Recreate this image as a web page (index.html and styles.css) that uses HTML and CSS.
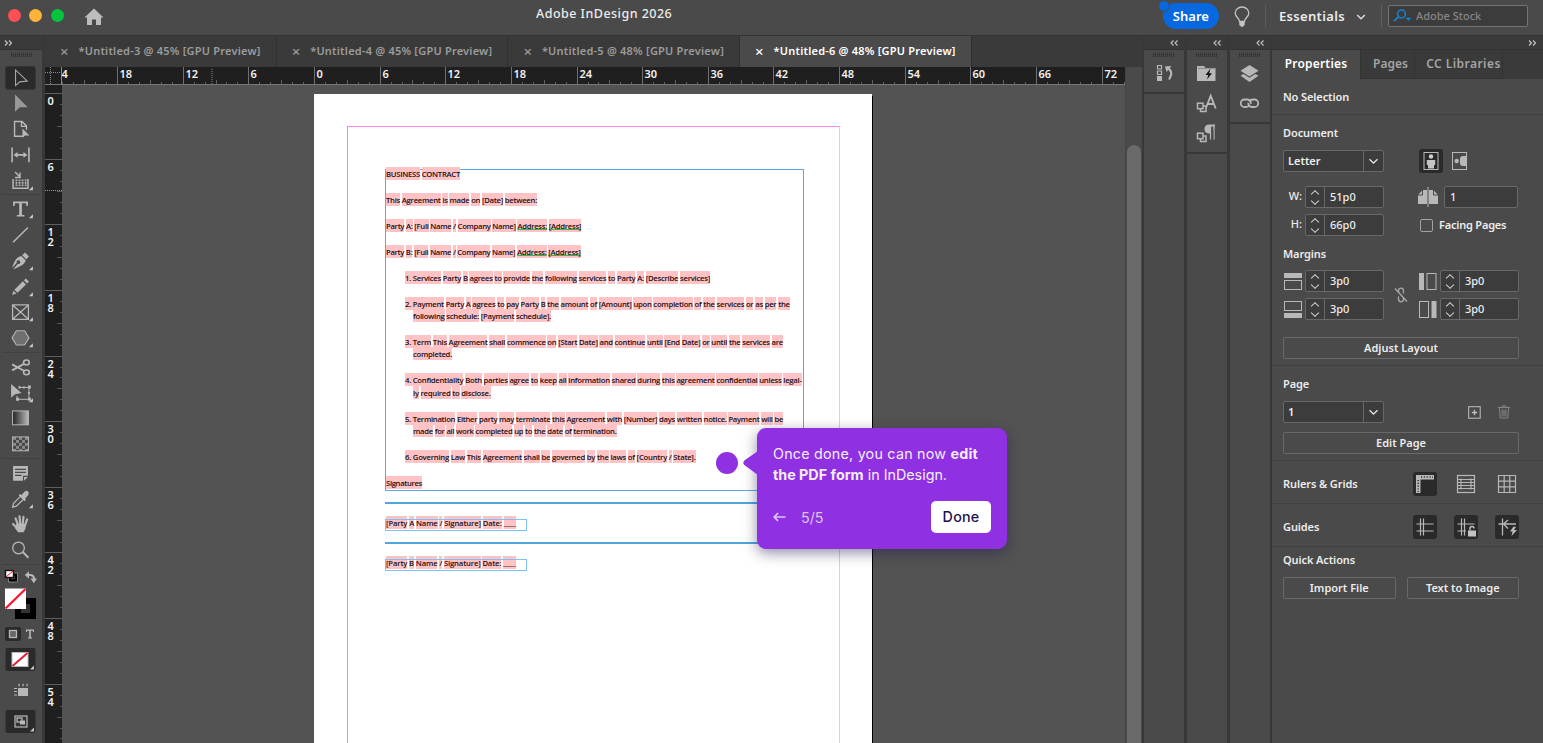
FILE: index.html
```
<!DOCTYPE html>
<html lang="en">
  <head>
    <meta charset="utf-8" />
    <title>Adobe InDesign 2026</title>
    <meta name="viewport" content="width=device-width, initial-scale=1" />
    <link rel="stylesheet" href="styles.css">
  </head>

  <body>
    <header class="titlebar">
      <div class="title-left">
        <span class="light red"></span>
        <span class="light yellow"></span>
        <span class="light green"></span>
        <svg class="home" width="20" height="18" viewBox="0 0 20 18"><path d="M10 0.5L19.5 9.5H17V17H12V11.5H8V17H3V9.5H0.5Z" fill="#bdbdbd"/></svg>
      </div>
      <h1>Adobe InDesign 2026</h1>
      <div class="title-right">
        <button class="share">Share</button>
        <svg class="bulb" width="16" height="22" viewBox="0 0 16 22"><path d="M5.5 15.5C5.5 12 1.2 11 1.2 7.2A6.8 6.2 0 0 1 14.8 7.2C14.8 11 10.5 12 10.5 15.5Z" fill="none" stroke="#c4c4c4" stroke-width="1.3"/><path d="M5.3 15.5H10.7V19L8 21.3L5.3 19Z" fill="#c4c4c4"/></svg>
        <i class="bar"></i>
        <span class="essentials">Essentials</span>
        <svg class="chev" width="10" height="6" viewBox="0 0 10 6"><path d="M1.2 1L5 4.7L8.8 1" fill="none" stroke="#d8d8d8" stroke-width="1.6"/></svg>
        <i class="bar"></i>
        <div class="stock">
          <svg width="20" height="14" viewBox="0 0 20 14"><circle cx="8.5" cy="5" r="3.9" fill="none" stroke="#1684d8" stroke-width="1.5"/><path d="M5.7 7.8L1 12" stroke="#1684d8" stroke-width="1.7"/><path d="M12.5 8.8H18.5L15.5 11.8Z" fill="#1684d8"/></svg>
          Adobe Stock
        </div>
      </div>
    </header>

    <div class="workspace">
      <!-- toolbox -->
      <aside class="toolbox">
        <div class="strip"><svg width="9" height="6" viewBox="0 0 9 6"><path d="M1 .5L3.500 3L1 5.500M5 .5L7.500 3L5 5.500"/></svg></div>
        <i class="grip"></i>
        <div class="tools">
          <svg class="tool" viewBox="0 0 42 26"><rect x="5.5" y="1.5" width="30" height="23" rx="2" fill="#2a2a2a" stroke="#343434"/><path d="M15.5 5V20.8L19.7 17L27.3 16.2Z" fill="none" stroke="#a8a8a8" stroke-width="1.1"/></svg>
          <svg class="tool" viewBox="0 0 42 26"><path d="M15 4.5V22L19.8 17.5L27.8 17.3Z" fill="#999"/></svg>
          <svg class="tool" viewBox="0 0 42 26"><path d="M23 20.5H14.5V5.5H22L26.5 10V14M21.5 5.5V10.5H26.5" fill="none" stroke="#b8b8b8" stroke-width="1.4"/><path d="M22.5 12.5V22L25 19.6H29.5Z" fill="#b8b8b8"/></svg>
          <svg class="tool" viewBox="0 0 42 26"><path d="M12 5.5V20.5M29 5.5V20.5M15 13H26" fill="none" stroke="#b8b8b8" stroke-width="1.6"/><path d="M13.5 13L17.5 10V16ZM27.5 13L23.5 10V16Z" fill="#b8b8b8"/></svg>
          <svg class="tool" viewBox="0 0 42 26"><path d="M13 11V20.5H28V11M15 4L20 9M20 4.5V9.5H15" fill="none" stroke="#b8b8b8" stroke-width="1.5"/><path d="M15.5 12.5H26.5M15.5 15H26.5M15.5 17.5H26.5" stroke="#b8b8b8" stroke-width="1.6" stroke-dasharray="1.8 1.3"/><path class="more" d="M33 18.5V22.5H29Z"/></svg>
          <i class="sep"></i>
          <svg class="tool" viewBox="0 0 42 26"><path d="M13 5.5H28V10H26.6L26 7.4H21.9V19L24.5 19.5V20.7H16.7V19.5L19.2 19V7.4H15L14.4 10H13Z" fill="#b8b8b8"/><path class="more" d="M33 18.5V22.5H29Z"/></svg>
          <svg class="tool" viewBox="0 0 42 26"><path d="M13 20.5L28 5.5" stroke="#b8b8b8" stroke-width="1.5"/></svg>
          <svg class="tool" viewBox="0 0 42 26"><path d="M22.2 7.2L25 4.5L29 8.5L26.3 11.3ZM21.3 8L25.7 12.4C25 16 21.5 18.5 13 21.5L18 16A1.8 1.8 0 1 0 16.8 15L12 20.2C14.5 12 17 9 21.3 8Z" fill="#b8b8b8"/><path class="more" d="M33 18.5V22.5H29Z"/></svg>
          <svg class="tool" viewBox="0 0 42 26"><path d="M24 6.3L26 4.5L29 7.5L27.1 9.5ZM22.9 7.3L26 10.5L17.5 19L14.3 15.8ZM13.4 16.8L16.4 19.8L12 21.3Z" fill="#b8b8b8"/><path class="more" d="M33 18.5V22.5H29Z"/></svg>
          <svg class="tool" viewBox="0 0 42 26"><path d="M12.5 6H28.5V20.5H12.5ZL28.5 20.5M28.5 6L12.5 20.5" fill="none" stroke="#b8b8b8" stroke-width="1.3"/><path class="more" d="M33 18.5V22.5H29Z"/></svg>
          <svg class="tool" viewBox="0 0 42 26"><path d="M12 13L16.3 5.8H24.7L29 13L24.7 20.2H16.3Z" fill="#707070" stroke="#b0b0b0" stroke-width="1.2"/><path class="more" d="M33 18.5V22.5H29Z"/></svg>
          <i class="sep"></i>
          <svg class="tool" viewBox="0 0 42 26"><g fill="none" stroke="#b8b8b8" stroke-width="1.6"><ellipse cx="26.500" cy="8.500" rx="2.900" ry="2.400"/><ellipse cx="26.500" cy="18.500" rx="2.900" ry="2.400"/><path d="M24 10L12 16.500M24 17L12 10.500" stroke-width="1.800"/></g></svg>
          <svg class="tool" viewBox="0 0 42 26"><path d="M11 4V18L15 14.5L21.5 13Z" fill="#b8b8b8"/><path d="M20 7.5H29V19.5H17V16" fill="none" stroke="#b8b8b8"/><g fill="#b8b8b8"><path d="M28 5.5h3v3h-3zM28 18h3v3h-3zM16 18h3v3h-3zM18.500 6h2v2.500h-2zM23 6.500h2v2h-2zM28 12h2v2h-2z"/></g><path class="more" d="M33 18.5V22.5H29Z"/></svg>
          <svg class="tool" viewBox="0 0 42 26"><defs><linearGradient id="grad"><stop offset="0" stop-color="#222"/><stop offset="1" stop-color="#bbb"/></linearGradient></defs><rect x="12.5" y="6" width="16" height="14" fill="url(#grad)" stroke="#b8b8b8"/></svg>
          <svg class="tool" viewBox="0 0 42 26"><defs><pattern id="check" x="13" y="6" width="6" height="6" patternUnits="userSpaceOnUse"><rect width="6" height="6" fill="#444"/><path d="M0 0h3v3h-3zM3 3h3v3h-3z" fill="#8b8b8b"/></pattern></defs><rect x="12.500" y="6" width="16" height="14" fill="url(#check)" stroke="#b8b8b8"/></svg>
          <i class="sep"></i>
          <svg class="tool" viewBox="0 0 42 26"><path d="M13 6H28V16H23V21H13Z" fill="#b8b8b8"/><path d="M24 17.2H28L24 21Z" fill="#b8b8b8"/><path d="M15 9.500H26M15 12.500H26M15 15.500H21.500" stroke="#4a4a4a" stroke-width="1.100"/></svg>
          <svg class="tool" viewBox="0 0 42 26"><path d="M21.5 9L24.500 5.800Q26.500 4 28.300 5.700Q29.800 7.400 28 9.500L25.200 12.500L26 14L24.500 15.300L18.700 9.500L20 8.200Z" fill="#b8b8b8"/><path d="M20 11L13.500 17.500L12.500 21.300L16.300 20.300L23 13.800" fill="none" stroke="#b8b8b8" stroke-width="1.300"/><path class="more" d="M33 18.5V22.5H29Z"/></svg>
          <svg class="tool" viewBox="0 0 42 26"><g stroke="#b8b8b8" stroke-linecap="round" stroke-width="2.200" fill="none"><path d="M18 14L15.500 7.500M20.200 13L19.500 5.500M22.700 13L23.500 6M25 14.500L27.200 8.500M17 17.500L13 13.200"/></g><path d="M16.500 12.500L26.200 13L25.500 18L23.500 21.500H18L15 17.500Z" fill="#b8b8b8"/></svg>
          <svg class="tool" viewBox="0 0 42 26"><circle cx="18.500" cy="11" r="5.900" fill="none" stroke="#b8b8b8" stroke-width="1.300"/><path d="M22.800 15.200L28.500 21" stroke="#b8b8b8" stroke-width="2"/></svg>
          <i class="sep"></i>
          <!-- fill and stroke -->
          <svg class="swatches" width="42" height="59" viewBox="0 0 42 59"><g transform="translate(0 -565)">
            <rect x="10" y="573.500" width="6" height="6" fill="none" stroke="#000" stroke-width="2.500"/><rect x="8.500" y="572" width="9" height="9" fill="none" stroke="#aaa" stroke-width=".6"/><rect x="5.500" y="569.500" width="8" height="7" fill="#fff" stroke="#111" stroke-width="1.400"/><path d="M6 576L13 570" stroke="#f01830"/>
            <path d="M27.500 574H30Q34 574 34 578" fill="none" stroke="#b8b8b8" stroke-width="2"/><path d="M24.800 574L29 570.300V577.700ZM30.500 577.500H37L33.800 582.300Z" fill="#b8b8b8"/>
            <rect x="18" y="600" width="15" height="15" fill="#4a4a4a" stroke="#000" stroke-width="6"/><rect x="20.500" y="602.500" width="10" height="10" fill="#333" stroke="#000"/>
            <rect x="5" y="587.500" width="21" height="20.500" fill="#fff"/><path d="M5.500 607.500L25.500 588" stroke="#fa1530" stroke-width="2.300"/>
          </g></svg>
          <svg width="42" height="20" viewBox="0 0 42 20"><rect x="5" y="2" width="16" height="14" rx="2" fill="#2a2a2a"/><rect x="9.500" y="5.500" width="7" height="7" fill="#666" stroke="#b8b8b8" stroke-width="1.300"/><path d="M26 4.500H34V7H33.200L32.700 5.700H30.800V12.300L32 12.600V13.400H28V12.600L29.200 12.300V5.700H27.300L26.800 7H26Z" fill="#b8b8b8"/></svg>
          <svg width="42" height="30" viewBox="0 0 42 30"><rect x="5.500" y="3" width="30" height="23" rx="2" fill="#2a2a2a"/><rect x="12" y="7.500" width="16" height="14" fill="#fff" stroke="#bbb"/><path d="M12.500 21L27.500 8" stroke="#e61d33" stroke-width="2"/><path class="more" d="M34 20.500V24.500H30Z"/></svg>
          <svg width="42" height="32" viewBox="0 0 42 32"><path d="M18 13H28V21H18Z" fill="#b8b8b8"/><path d="M18.500 10H28" stroke="#b8b8b8" stroke-width="2.500" stroke-dasharray="1.200 2.800"/><path d="M14 13.500H17M14 16.500H17M14 20H17" stroke="#b8b8b8" stroke-width="1.200"/></svg>
          <svg width="42" height="30" viewBox="0 0 42 30"><rect x="5.500" y="3" width="30" height="23" rx="2" fill="#2a2a2a"/><rect x="15" y="9" width="12" height="11" fill="#333" stroke="#b8b8b8" stroke-width="1.200"/><rect x="17" y="11" width="5" height="4" fill="none" stroke="#b8b8b8" stroke-width="1.300"/><rect x="20" y="13.500" width="5" height="4" fill="#b8b8b8"/><path class="more" d="M34 20.500V24.500H30Z"/></svg>
        </div>
      </aside>

      <!-- open documents -->
      <main class="editor">
        <nav class="tabs">
          <div class="tab"><b>×</b>*Untitled-3 @ 45% [GPU Preview]</div>
          <div class="tab"><b>×</b>*Untitled-4 @ 45% [GPU Preview]</div>
          <div class="tab"><b>×</b>*Untitled-5 @ 48% [GPU Preview]</div>
          <div class="tab active"><b>×</b>*Untitled-6 @ 48% [GPU Preview]</div>
        </nav>
        <div class="view">
          <div class="ruled">
            <svg id="ruler-x" width="1080" height="18"></svg>
            <div class="ruled-body">
              <svg id="ruler-y" width="17" height="658"></svg>
              <div class="canvas">
                <div class="page">
                  <div class="margins"></div>
                  <div class="frame">
                    <div class="copy" id="copy"></div>
                  </div>
                  <i class="rule first"></i>
                  <div class="sign a"></div>
                  <i class="rule second"></i>
                  <div class="sign b"></div>
                </div>
                <i class="dot"></i>
                <div class="callout">
                  <svg class="beak" width="15" height="24" viewBox="0 0 15 24"><path d="M15 0L2 9Q-1.500 12 2 14.500L15 24Z" fill="#8f30e2"/></svg>
                  <p><span class="fit" data-w="205">Once done, you can now <strong>edit</strong></span><br /><span class="fit" data-w="174"><strong>the PDF form</strong> in InDesign.</span></p>
                  <div class="callout-foot">
                    <svg width="13" height="10" viewBox="0 0 13 10"><path d="M12.500 5H1.500M5 1.200L1.200 5L5 8.800" fill="none" stroke="#dcc5f3" stroke-width="1.700"/></svg>
                    <span class="step">5/5</span>
                    <button class="done">Done</button>
                  </div>
                </div>
              </div>
            </div>
          </div>
          <div class="scroll"><i></i></div>
        </div>
      </main>

      <!-- collapsed panels -->
      <aside class="dock">
        <div class="strip"><svg width="9" height="6" viewBox="0 0 9 6"><path d="M3.500 .5L1 3L3.500 5.500M7.500 .5L5 3L7.500 5.500"/></svg></div>
        <div class="dock-box one">
          <i class="grip"></i>
          <svg width="40" height="30" viewBox="0 0 40 30"><g fill="none" stroke="#b8b8b8" stroke-width="1.200"><path d="M13.500 6.500h4v3.500h-4zM13.500 12h4v3.500h-4z"/></g><path d="M13 17h5v5h-5z" fill="#b8b8b8"/><path d="M22.500 8.500Q30.500 12 25 20.500" fill="none" stroke="#b8b8b8" stroke-width="2"/><path d="M21 7.500L27.500 7L22.500 13Z" fill="#b8b8b8"/></svg>
        </div>
        <div class="dock-rest"></div>
      </aside>
      <aside class="dock">
        <div class="strip"><svg width="9" height="6" viewBox="0 0 9 6"><path d="M3.500 .5L1 3L3.500 5.500M7.500 .5L5 3L7.500 5.500"/></svg></div>
        <div class="dock-box three">
          <i class="grip"></i>
          <svg width="40" height="30" viewBox="0 0 40 30"><path d="M10 7H17L18.500 9H28.500V22H10Z" fill="#b8b8b8"/><path d="M11 9.300H28" stroke="#777" stroke-width=".7"/><path d="M23.500 9.500L18.500 16H21.300L20 20.500L25 14.300H22.200Z" fill="#151515"/></svg>
          <svg width="40" height="30" viewBox="0 0 40 30"><path d="M18.700 19.500L23.700 6.800L28.700 19.500M20.500 15H27" fill="none" stroke="#b8b8b8" stroke-width="1.800"/><g fill="#4a4a4a" stroke="#b8b8b8" stroke-width="1.500"><rect x="13.500" y="17" width="5.500" height="5.500"/><rect x="10.500" y="14.200" width="5.500" height="5.500"/></g></svg>
          <svg width="40" height="30" viewBox="0 0 40 30"><path d="M28 6H22A4 4 0 0 0 22 14H23.500V20.500M27 6V20.500" fill="#b8b8b8" stroke="#b8b8b8" stroke-width="1.200"/><path d="M24.100 7.500V20H26.300V7.500Z" fill="#4a4a4a"/><g fill="#4a4a4a" stroke="#b8b8b8" stroke-width="1.500"><rect x="13.500" y="17" width="5.500" height="5.500"/><rect x="10.500" y="14.200" width="5.500" height="5.500"/></g></svg>
        </div>
        <div class="dock-rest"></div>
      </aside>
      <aside class="dock">
        <div class="strip"><svg width="9" height="6" viewBox="0 0 9 6"><path d="M3.500 .5L1 3L3.500 5.500M7.500 .5L5 3L7.500 5.500"/></svg></div>
        <div class="dock-box two">
          <i class="grip"></i>
          <svg width="40" height="30" viewBox="0 0 40 30"><path d="M19.500 6L28.500 11.800L19.500 17.500L10.500 11.800Z" fill="#b8b8b8"/><path d="M10.500 16.800L13.500 15L19.500 18.800L25.500 15L28.500 16.800L19.500 23Z" fill="#b8b8b8"/></svg>
          <svg width="40" height="30" viewBox="0 0 40 30"><g fill="none" stroke="#b8b8b8" stroke-width="1.800"><path d="M20 16Q18.500 18 16 18H14.500A3.700 3.700 0 0 1 14.500 10.500H17.500A3.700 3.700 0 0 1 20.800 14.800"/><path d="M19 12.500Q20.500 10.500 23 10.500H24.500A3.700 3.700 0 0 1 24.500 18H21.500A3.700 3.700 0 0 1 18.300 13.800"/></g></svg>
        </div>
        <div class="dock-rest"></div>
      </aside>

      <!-- properties -->
      <aside class="props">
        <div class="strip"><svg width="9" height="6" viewBox="0 0 9 6"><path d="M1 .5L3.500 3L1 5.500M5 .5L7.500 3L5 5.500"/></svg></div>
        <nav class="prop-tabs">
          <span class="on">Properties</span><span class="pages">Pages</span><span class="cc">CC Libraries</span>
        </nav>
        <section class="nosel"><h3>No Selection</h3></section>
        <section class="doc">
          <h3>Document</h3>
          <div class="row">
            <div class="select"><span>Letter</span><svg width="19" height="20" viewBox="0 0 19 20"><path d="M5.500 8.300L9.500 12L13.500 8.300" fill="none" stroke="#e4e4e4" stroke-width="1.300"/></svg></div>
            <div class="right orient">
              <svg width="24" height="24" viewBox="0 0 24 24"><rect width="24" height="24" rx="3" fill="#2a2a2a"/><rect x="5" y="3.500" width="14" height="17" fill="none" stroke="#b8b8b8"/><circle cx="12" cy="7.500" r="2.200" fill="#d0d0d0"/><path d="M7.800 11H16.200V16H15V19.500H9V16H7.800Z" fill="#c4c4c4"/></svg>
              <svg width="15" height="18" viewBox="0 0 15 18"><rect x=".5" y=".5" width="14" height="17" fill="none" stroke="#b8b8b8"/><circle cx="4.700" cy="9" r="2.200" fill="#b8b8b8"/><path d="M14 4V14H11Q8 14 8 11V7Q8 4 11 4Z" fill="#b8b8b8"/></svg>
            </div>
          </div>
          <div class="row dim w">
            <label>W:</label><div class="spin"><i></i><span>51p0</span></div>
            <div class="right count"><svg width="20" height="20" viewBox="0 0 20 20"><path d="M0 8L4.500 3H9V17H0ZM20 8L15.500 3H11V17H20Z" fill="#b8b8b8"/><path d="M4.500 3V8H0M15.500 3V8H20" fill="none" stroke="#4a4a4a"/><path d="M10 0V20" stroke="#b8b8b8"/></svg><div class="input">1</div></div>
          </div>
          <div class="row dim">
            <label>H:</label><div class="spin"><i></i><span>66p0</span></div>
            <div class="right facing"><i class="checkbox"></i>Facing Pages</div>
          </div>
          <h3 class="margins-title">Margins</h3>
          <div class="margin-grid">
            <div class="col">
              <div class="row"><svg width="22" height="19" viewBox="0 0 22 19"><path d="M1 1H19V6H1Z" fill="#b8b8b8"/><rect x="1.500" y="8.500" width="17" height="9" fill="none" stroke="#b8b8b8"/></svg><div class="spin"><i></i><span>3p0</span></div></div>
              <div class="row"><svg width="22" height="19" viewBox="0 0 22 19"><path d="M1 13H19V18H1Z" fill="#b8b8b8"/><rect x="1.500" y="1.500" width="17" height="9" fill="none" stroke="#b8b8b8"/></svg><div class="spin"><i></i><span>3p0</span></div></div>
            </div>
            <svg class="unlink" width="14" height="16" viewBox="0 0 14 16"><g fill="none" stroke="#a8a8a8" stroke-width="1.300"><path d="M4.500 5V4A2.500 2.800 0 0 1 9.500 4V6.500M4.500 9.500V12A2.500 2.800 0 0 0 9.500 12V11M1 1.500L13 14.500"/></g></svg>
            <div class="col">
              <div class="row"><svg width="21" height="19" viewBox="0 0 21 19"><path d="M0 1H5V18H0Z" fill="#b8b8b8"/><rect x="8" y="1.500" width="9" height="16" fill="none" stroke="#b8b8b8"/></svg><div class="spin"><i></i><span>3p0</span></div></div>
              <div class="row"><svg width="21" height="19" viewBox="0 0 21 19"><path d="M12.500 1H17.500V18H12.500Z" fill="#b8b8b8"/><rect x=".5" y="1.500" width="9" height="16" fill="none" stroke="#b8b8b8"/></svg><div class="spin"><i></i><span>3p0</span></div></div>
            </div>
          </div>
          <button class="wide adjust">Adjust Layout</button>
        </section>
        <section class="pagesec">
          <h3>Page</h3>
          <div class="row">
            <div class="select"><span>1</span><svg width="19" height="20" viewBox="0 0 19 20"><path d="M5.500 8.300L9.500 12L13.500 8.300" fill="none" stroke="#e4e4e4" stroke-width="1.300"/></svg></div>
            <div class="page-icons">
              <svg width="13" height="13" viewBox="0 0 13 13"><rect x=".7" y=".7" width="11.500" height="11.500" fill="none" stroke="#c0c0c0"/><path d="M6.500 3.800V9.200M3.800 6.500H9.200" stroke="#c0c0c0" stroke-width="1.300"/></svg>
              <svg width="12" height="14" viewBox="0 0 12 14"><path d="M0 2.500H12M4 2.500V1H8V2.500M1.500 3L2.300 13H9.700L10.500 3M4.200 4.500V11.500M6 4.500V11.500M7.800 4.500V11.500" fill="none" stroke="#858585"/></svg>
            </div>
          </div>
          <button class="wide">Edit Page</button>
        </section>
        <section class="toggles rulers">
          <h3>Rulers &amp; Grids</h3>
          <svg class="tg on" viewBox="0 0 24 24"><path d="M3 3H21V7.500H7.500V21H3Z" fill="#b8b8b8"/><path d="M8 5H20M5.200 8V20" stroke="#333" stroke-width="1.600" stroke-dasharray="1.200 1.600"/></svg>
          <svg class="tg" viewBox="0 0 24 24"><rect x="3.500" y="3.500" width="17" height="17" fill="none" stroke="#b8b8b8" stroke-width="1.200"/><path d="M4 7.500H20M4 10.500H20M4 13.500H20M4 16.500H20M7 6.500V17.500M17 6.500V17.500" stroke="#b8b8b8" stroke-width="1.100"/></svg>
          <svg class="tg" viewBox="0 0 24 24"><path d="M3.500 3.500H20.500V20.500H3.500ZM9.200 3.500V20.500M14.800 3.500V20.500M3.500 9.200H20.500M3.500 14.800H20.500" fill="none" stroke="#b8b8b8" stroke-width="1.200"/></svg>
        </section>
        <section class="toggles">
          <h3>Guides</h3>
          <svg class="tg on" viewBox="0 0 24 24"><path d="M7.500 3.500V20.500M10.500 3.500V20.500M3.500 9H20.500M3.500 16H20.500" stroke="#b8b8b8" stroke-width="1.200"/></svg>
          <svg class="tg on" viewBox="0 0 24 24"><path d="M7.500 3.500V20.500M10.500 3.500V20.500M3.500 9H20.500M3.500 16H12" stroke="#b8b8b8" stroke-width="1.200"/><path d="M14 15.500H22V21.500H14Z" fill="#c4c4c4"/><path d="M16 15.500V13.500A2 2 0 0 1 20 13.500" fill="none" stroke="#c4c4c4" stroke-width="1.400"/></svg>
          <svg class="tg on" viewBox="0 0 24 24"><path d="M7.500 3.500V20.500M3.500 9H21M13 5L8.500 9L13 13.500" fill="none" stroke="#b8b8b8" stroke-width="1.300"/><path d="M18.500 11.500L15 16.500H17.500L16.500 21L22 15H19L21 12Z" fill="#b8b8b8"/></svg>
        </section>
        <section class="quick">
          <h3>Quick Actions</h3>
          <div class="row"><button>Import File</button><button>Text to Image</button></div>
        </section>
      </aside>
    </div>
    <script src="script.js"></script>
  </body>
</html>
```
FILE: styles.css
```
*,
*:before,
*:after {
  box-sizing: border-box;
}

body {
  margin: 0;
  width: 1543px;
  height: 743px;
  overflow: hidden;
  display: flex;
  flex-direction: column;
  background: #383838;
  color: #ececec;
  font: 600 11px/16px "Noto Sans", "Open Sans", sans-serif;
}

svg {
  display: block;
  flex: none;
}

h1,
h3,
p {
  margin: 0;
}

h3 {
  font-size: 11px;
  font-weight: 600;
  line-height: 16px;
  letter-spacing: -.1px;
}

button {
  font: inherit;
  color: inherit;
  padding: 0 0 1px;
  background: none;
  border: 1px solid #686868;
  border-radius: 2px;
  height: 22px;
}

/* title bar */
.titlebar {
  display: flex;
  height: 35px;
  flex: none;
  background: #4a4a4a;
}

.title-left {
  display: flex;
  align-items: center;
  gap: 8px;
  width: 536px;
  padding: 0 0 5px 7.5px;
}

.light {
  width: 13px;
  height: 13px;
  border-radius: 50%;
}

.light.red { background: #fe5054; }
.light.yellow { background: #ffb33b; }
.light.green { background: #03c63e; }

.light.yellow,
.light.green {
  margin-left: .5px;
}

.home {
  margin: 4px 0 0 12px;
}

h1 {
  font-size: 12.5px;
  font-weight: 500;
  line-height: 27px;
  letter-spacing: .47px;
  white-space: nowrap;
}

.title-right {
  display: flex;
  align-items: center;
  height: 32px;
  margin-left: auto;
  padding-right: 15px;
}

.share {
  position: relative;
  width: 56px;
  height: 26px;
  border: 0;
  border-radius: 13px;
  background: #0768e0;
  color: #fff;
  font-size: 13px;
}

.share:before {
  content: "";
  position: absolute;
  left: -5px;
  top: -3px;
  width: 12px;
  height: 12px;
  border-radius: 50%;
  background: #0768e0;
  border: 1px solid #4a4a4a;
}

.bulb {
  margin: 2px 15px 0;
}

.bar {
  width: 1px;
  height: 22px;
  background: #5e5e5e;
}

.essentials {
  margin-left: 13px;
  font-size: 13px;
  letter-spacing: .35px;
}

.chev {
  margin: 2px 15px 0 11px;
}

.stock {
  display: flex;
  align-items: center;
  gap: 3px;
  width: 140px;
  height: 22px;
  margin-left: 6px;
  padding-left: 4px;
  border: 1px solid #757575;
  border-radius: 2px;
  background: #3c3c3c;
  color: #858585;
  font-size: 11px;
  font-weight: 500;
}

/* workspace columns */
.workspace {
  display: flex;
  flex: 1;
  min-height: 0;
  border-top: 1px solid #333;
}

.strip {
  display: flex;
  justify-content: flex-end;
  align-items: center;
  height: 14px;
  flex: none;
  background: #3a3a3a;
  border-bottom: 1px solid #333;
}

.strip path {
  fill: none;
  stroke: #c8c8c8;
  stroke-width: 1.1;
}

.grip {
  display: block;
  flex: none;
  width: 21px;
  height: 4px;
  margin: 3px auto 0;
  background: repeating-linear-gradient(90deg, #333 0 1px, #4a4a4a 1px 2px);
}

.toolbox {
  width: 42px;
  margin-right: 3px;
  background: #4a4a4a;
  display: flex;
  flex-direction: column;
}

.toolbox .strip {
  justify-content: flex-start;
  padding-left: 4px;
}

.tools {
  margin-top: 7.5px;
}

.tool {
  width: 42px;
  height: 25.75px;
}

.more {
  fill: #c9c9c9;
}

.sep {
  display: block;
  height: 1px;
  margin: 1px 2px;
  background: #404040;
}

/* tabs */
.editor {
  width: 1097px;
  flex: none;
  display: flex;
  flex-direction: column;
}

.tabs {
  display: flex;
  height: 31px;
  flex: none;
  background: #3a3a3a;
}

.tab {
  display: flex;
  align-items: center;
  width: 231.7px;
  padding: 0 0 2px 15px;
  border-right: 1px solid #303030;
  color: #9c9c9c;
  font-size: 11px;
  letter-spacing: .22px;
  white-space: nowrap;
}

.tab b {
  width: 18.500px;
  font: 500 15px/14px "Noto Sans", sans-serif;
}

.tab.active {
  background: #4a4a4a;
  color: #fff;
}

.view {
  display: flex;
  flex: 1;
  min-height: 0;
}

.ruled {
  width: 1080px;
}

.ruled-body {
  display: flex;
}

#ruler-x,
#ruler-y {
  background: #1f1f1f;
}

#ruler-x {
  border-bottom: 1px solid #777;
}

.scroll {
  width: 17px;
  padding: 78px 1px 0;
  background: #4a4a4a;
  border-left: 1px solid #444;
}

.scroll i {
  display: block;
  height: 620px;
  border-radius: 8px;
  background: #6a6a6a;
}

/* pasteboard, objects are placed freely on it */
.canvas {
  position: relative;
  width: 1063px;
  height: 658px;
  overflow: hidden;
  background: #535353;
}

.page {
  position: absolute;
  left: 252px;
  top: 9px;
  width: 558px;
  height: 720px;
  background: #fff;
  box-shadow: 1px 2px 0 #000;
}

.margins {
  position: absolute;
  left: 33px;
  top: 32px;
  width: 493px;
  height: 700px;
  border: 1px solid #cb94ee;
  border-top-color: #ff86ee;
  border-right-color: #dccdea;
}

.frame {
  position: absolute;
  left: 71px;
  top: 75px;
  width: 419px;
  height: 322px;
  border: 1px solid #55a9e8;
}

.copy {
  position: absolute;
  left: 0;
  top: -3px;
  width: 430px;
  color: #1a1012;
  font: 600 7.7px/12.4px "Open Sans", "Noto Sans", sans-serif;
}

.line {
  display: block;
  height: 12.4px;
  white-space: nowrap;
}

.line.para {
  margin-top: 13.620px;
}

.line.para:first-child {
  margin-top: 0;
}

.line.signature {
  margin-top: 27.600px;
}

.line mark {
  padding: 1.500px 0 1.500px;
  background: #ffc3c6;
  color: inherit;
}

.line mark.grammar {
  text-decoration: underline 1px #35b845;
  text-underline-offset: 1px;
  text-decoration-skip-ink: none;
}

.rule {
  position: absolute;
  left: 71px;
  width: 418px;
  height: 2px;
  background: #4fa5dd;
}

.rule.first { top: 408px; }
.rule.second { top: 448px; }

.sign {
  position: absolute;
  left: 71px;
  width: 142px;
  height: 12px;
  border: 1px solid #7dc0f2;
}

.sign.a { top: 425px; }
.sign.b { top: 465px; }

.dot {
  position: absolute;
  left: 654px;
  top: 367px;
  width: 22px;
  height: 22px;
  border-radius: 50%;
  background: #8f30e2;
}

.callout {
  position: absolute;
  left: 695px;
  top: 343px;
  width: 250px;
  height: 121px;
  padding: 15px 16px;
  border-radius: 9px;
  background: #8f30e2;
  box-shadow: 0 4px 14px rgba(35, 30, 80, .5);
  color: #f6eefd;
  font: 400 14.3px/21px Inter, sans-serif;
}

.callout strong {
  font-weight: 700;
}

.beak {
  position: absolute;
  left: -14px;
  top: 23px;
}

.callout p {
  white-space: nowrap;
}

.callout-foot {
  display: flex;
  align-items: center;
  margin-top: 16px;
}

.step {
  margin: 0 auto 0 15px;
  color: #dcc5f3;
}

.done {
  width: 60px;
  height: 32px;
  border: 0;
  border-radius: 5px;
  background: #fff;
  color: #20124d;
  font-weight: 500;
  letter-spacing: .2px;
}

/* collapsed docks */
.dock {
  width: 40px;
  margin: 0 1.500px;
  display: flex;
  flex-direction: column;
}

.dock .strip {
  padding-right: 5px;
}

.dock-box {
  flex: none;
  background: #4a4a4a;
  margin-bottom: 2px;
}

.dock-box .grip {
  margin: 0 auto 5px;
  position: relative;
  top: 3px;
}

.dock-box.one { height: 42px; }
.dock-box.two { height: 72px; }
.dock-box.three { height: 102px; }

.dock-rest {
  flex: 1;
  background: #4a4a4a;
}

/* properties panel */
.props {
  width: 271px;
  flex: none;
  margin-left: auto;
  background: #4a4a4a;
}

.props .strip {
  padding-right: 6px;
}

.prop-tabs {
  display: flex;
  height: 29px;
  background: #3a3a3a;
  font-size: 12px;
  line-height: 27px;
  color: #a4a4a4;
}

.prop-tabs span {
  border-right: 1px solid #333;
  border-bottom: 1px solid #333;
  text-align: center;
  white-space: nowrap;
}

.prop-tabs .on {
  width: 89px;
  background: #4a4a4a;
  border-bottom: 0;
  color: #fff;
  letter-spacing: .2px;
}

.prop-tabs .pages { width: 54px; padding-left: 6px; }
.prop-tabs .cc { width: 88px; padding-left: 10px; letter-spacing: .45px; }

section {
  padding: 0 24px 0 11px;
  border-bottom: 1px solid #404040;
}

.nosel {
  height: 36px;
  padding-top: 10px;
}

.row {
  display: flex;
  align-items: center;
}

.doc {
  height: 251px;
  padding-top: 10px;
}

.select {
  display: flex;
  width: 101px;
  height: 22px;
  background: #3c3c3c;
  border: 1px solid #686868;
  border-radius: 2px;
}

.select span {
  flex: 1;
  padding-left: 4px;
  line-height: 20px;
  border-right: 1px solid #686868;
}

.doc > h3 + .row {
  margin-top: 9px;
}

.right {
  display: flex;
  align-items: center;
  margin-left: 35px;
}

.orient {
  height: 22px;
  gap: 9px;
}

.dim {
  height: 22px;
  margin-top: 6px;
}

.dim.w {
  margin-top: 14px;
}

.dim label {
  width: 19px;
  margin: 0 3px 2px 0;
  text-align: right;
  font-weight: 500;
}

.spin,
.input {
  display: flex;
  width: 79px;
  height: 22px;
  background: #3c3c3c;
  border: 1px solid #686868;
  border-radius: 2px;
  line-height: 20px;
  font-weight: 500;
}

.spin i {
  width: 19px;
  position: relative;
  border-right: 1px solid #686868;
}

.spin i:before,
.spin i:after {
  content: "";
  position: absolute;
  left: 6px;
  width: 6px;
  height: 6px;
  border: solid #d8d8d8;
  border-width: 1.300px 0 0 1.300px;
  top: 4px;
  transform: scaleY(.9) rotate(45deg);
}

.spin i:after {
  top: 10.500px;
  transform: scaleY(.9) rotate(225deg);
}

.spin span {
  padding-left: 5px;
}

.count {
  margin-left: 34px;
}

.count .input {
  width: 74px;
  margin-left: 6px;
  padding-left: 5px;
}

.facing {
  letter-spacing: -.2px;
}

.checkbox {
  width: 13px;
  height: 13px;
  margin: 0 6px 0 1px;
  border: 1px solid #a2a2a2;
  border-radius: 2px;
}

.margins-title {
  margin-top: 10px;
}

.margin-grid {
  display: flex;
  align-items: center;
  margin-top: 8px;
}

.col {
  display: flex;
  flex-direction: column;
  gap: 6px;
}

.unlink {
  margin: 0 11px 0 10px;
}

.wide {
  display: block;
  width: 236px;
}

.adjust {
  margin-top: 17px;
}

.pagesec {
  height: 95px;
  padding-top: 10px;
}

.pagesec .row {
  margin: 9px 0 9px;
}

.page-icons {
  display: flex;
  align-items: center;
  gap: 17px;
  margin-left: 84px;
}

.toggles {
  display: flex;
  align-items: center;
  height: 43px;
  gap: 17px;
  padding-top: 3px;
}

.toggles h3 {
  width: 113px;
}

.tg {
  width: 24px;
  height: 24px;
  border-radius: 3px;
}

.tg.on {
  background: #2a2a2a;
}

.quick {
  border: 0;
  padding-top: 5px;
}

.quick .row {
  gap: 11px;
  margin-top: 9px;
}

.quick button {
  width: 113px;
}
```
FILE: script.js
```
const NS = "http://www.w3.org/2000/svg";
const PICA = 10.94;

// [text, width, indent, class]
const lines = [
  ["BUSINESS CONTRACT", 74, 0, "para"],
  ["This Agreement is made on [Date] between:", 151, 0, "para"],
  ["Party A: [Full Name / Company Name] Address: [Address]", 195, 0, "para"],
  ["Party B: [Full Name / Company Name] Address: [Address]", 194.5, 0, "para"],
  ["1. Services Party B agrees to provide the following services to Party A: [Describe services]", 305, 19, "para"],
  ["2. Payment Party A agrees to pay Party B the amount of [Amount] upon completion of the services or as per the", 384.5, 19, "para"],
  ["following schedule: [Payment schedule].", 138, 27, ""],
  ["3. Term This Agreement shall commence on [Start Date] and continue until [End Date] or until the services are", 378, 19, "para"],
  ["completed.", 39, 27, ""],
  ["4. Confidentiality Both parties agree to keep all information shared during this agreement confidential unless legal-", 396.5, 19, "para"],
  ["ly required to disclose.", 77.5, 27, ""],
  ["5. Termination Either party may terminate this Agreement with [Number] days written notice. Payment will be", 378, 19, "para"],
  ["made for all work completed up to the date of termination.", 203.5, 27, ""],
  ["6. Governing Law This Agreement shall be governed by the laws of [Country / State].", 290.5, 19, "para"],
  ["Signatures", 36, 0, "para"],
  ["[Party A Name / Signature] Date: ____", 130, 0, "signature"],
  ["[Party B Name / Signature] Date: ____", 129.5, 0, "signature"],
];

function fit(el, width) {
  const extra = width - el.getBoundingClientRect().width;
  el.style.letterSpacing = extra / el.textContent.length + "px";
}

const copy = document.getElementById("copy");

lines.forEach(([text, width, indent, cls]) => {
  const line = document.createElement("div");
  line.className = "line " + cls;
  line.style.paddingLeft = indent + "px";
  const run = document.createElement("span");
  // keep the list number and its first word in one highlight
  text.replace(/^(\d\.) /, "$1\u00a0").split(" ").forEach((word, i) => {
    if (i) run.append(" ");
    const mark = document.createElement("mark");
    mark.textContent = word;
    if (word.includes("Address")) mark.className = "grammar";
    run.append(mark);
  });
  line.append(run);
  copy.append(line);
  fit(run, width);
});

document.querySelectorAll(".fit").forEach((el) => fit(el, Number(el.dataset.w)));

function add(svg, name, attrs, text) {
  const el = document.createElementNS(NS, name);
  for (const key in attrs) el.setAttribute(key, attrs[key]);
  if (text) el.textContent = text;
  svg.append(el);
}

const label = { fill: "#f2f2f2", "font-size": 11, "font-weight": 600 };

// horizontal ruler, zero sits on the left page edge
const rx = document.getElementById("ruler-x");
for (let p = -23; p <= 74; p++) {
  const x = Math.round(269 + p * PICA) + 0.5;
  const major = p % 6 === 0;
  const top = major ? 0 : p % 3 === 0 ? 13 : 15;
  add(rx, "path", { d: `M${x} ${top}V18`, stroke: major ? "#707070" : "#606060" });
  if (major && x < 1075) add(rx, "text", { ...label, x: x + 2, y: 11 }, String(Math.abs(p)));
}
add(rx, "text", { ...label, x: 16.5, y: 11 }, "4");
add(rx, "path", { d: "M16.5 0V18", stroke: "#8a8a8a" });
add(rx, "path", { d: "M0 5.5H17M5.5 0V18M167 2V18", stroke: "#888", "stroke-dasharray": "1 1" });

// vertical ruler, digits are stacked
const ry = document.getElementById("ruler-y");
for (let p = 0; p <= 59; p++) {
  const y = Math.round(8 + p * PICA) + 0.5;
  const major = p % 6 === 0;
  const left = major ? 0 : p % 3 === 0 ? 12 : 15;
  add(ry, "path", { d: `M${left} ${y}H17`, stroke: major ? "#606060" : "#555" });
  if (major) {
    [...String(p)].forEach((digit, i) => add(ry, "text", { ...label, x: 2.5, y: y + 11 + i * 10 }, digit));
  }
}
add(ry, "path", { d: "M0 105.5H17", stroke: "#999", "stroke-dasharray": "1 1" });
```
